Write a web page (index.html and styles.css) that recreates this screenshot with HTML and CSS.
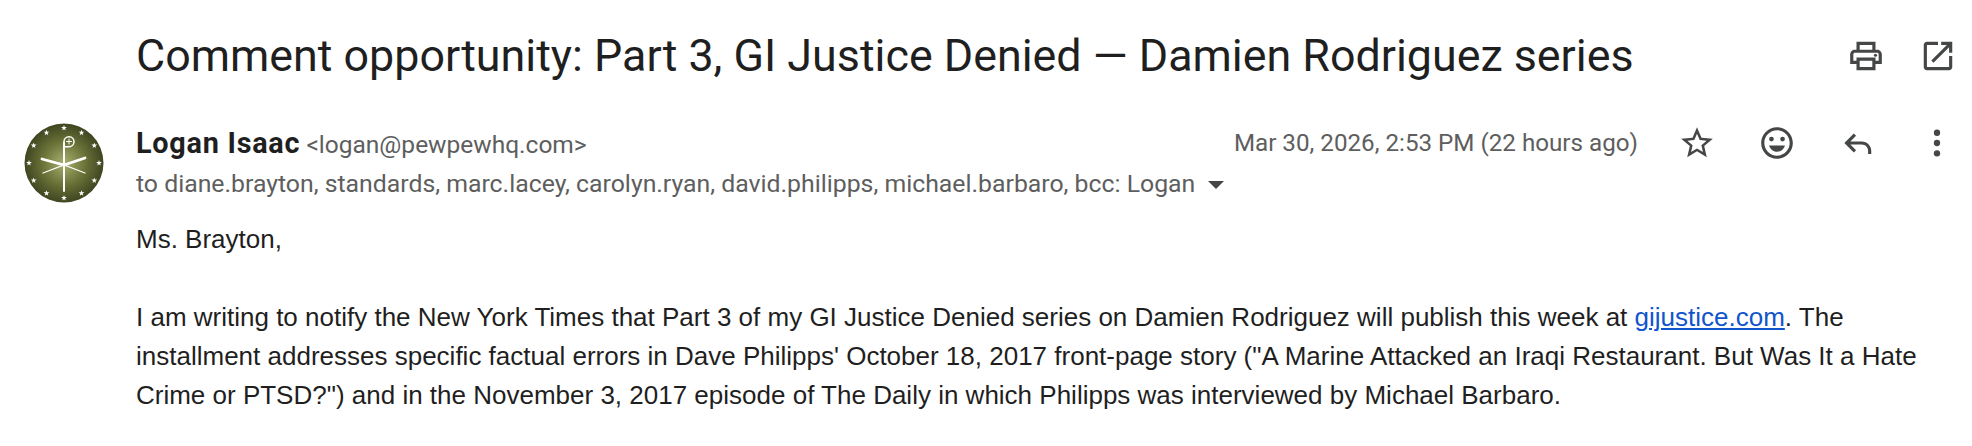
FILE: index.html
```html
<!DOCTYPE html>
<html lang="en">
<head>
<meta charset="utf-8">
<title>Comment opportunity</title>
<link rel="stylesheet" href="styles.css">
</head>
<body>
<main class="mail">
  <header class="subject-row">
    <h1 class="subject">Comment opportunity: Part 3, GI Justice Denied — Damien Rodriguez series</h1>
    <div class="subject-icons">
      <svg class="icon" viewBox="0 0 24 24"><path d="M19 8h-1V3H6v5H5c-1.66 0-3 1.34-3 3v6h4v4h12v-4h4v-6c0-1.66-1.34-3-3-3zM8 5h8v3H8V5zm8 14H8v-4h8v4zm2-4v-2H6v2H4v-4c0-.55.45-1 1-1h14c.55 0 1 .45 1 1v4h-2z"/><circle cx="18" cy="11.500" r="1"/></svg>
      <svg class="icon" viewBox="0 0 24 24"><path d="M19 19H5V5h7V3H5c-1.100 0-2 .9-2 2v14c0 1.100.9 2 2 2h14c1.100 0 2-.9 2-2v-7h-2v7zM14 3v2h3.590l-9.830 9.830 1.410 1.410L19 6.410V10h2V3h-7z"/></svg>
    </div>
  </header>
  <section class="message">
    <svg class="avatar" viewBox="0 0 80 80">
      <defs>
        <radialGradient id="olive"><stop offset="0" stop-color="#a8b070"/><stop offset="0.55" stop-color="#6a7238"/><stop offset="1" stop-color="#3f4520"/></radialGradient>
        <path id="st" d="M0-3L.7-1 2.900-1 1.100.4 1.800 2.500 0 1.200-1.800 2.500-1.100.4-2.900-1-.7-1z" fill="#fff"/>
      </defs>
      <circle cx="40" cy="40" r="39.500" fill="url(#olive)"/>
      <use href="#st" x="40" y="5"/><use href="#st" x="57.500" y="9.700"/><use href="#st" x="70.300" y="22.500"/><use href="#st" x="75" y="40"/><use href="#st" x="70.300" y="57.500"/><use href="#st" x="57.500" y="70.300"/><use href="#st" x="40" y="75"/><use href="#st" x="22.500" y="70.300"/><use href="#st" x="9.700" y="57.500"/><use href="#st" x="5" y="40"/><use href="#st" x="9.700" y="22.500"/><use href="#st" x="22.500" y="9.700"/>
      <g fill="none" stroke="#fff" stroke-linecap="round">
        <path d="M40 68V20" stroke-width="2"/>
        <path d="M40 27V18.500a5 5 0 1 1 5 5.200h-4" stroke-width="1.500"/>
        <path d="M45 16v5M42.500 18.500h5" stroke-width="1"/>
        <path d="M18 36L40 42L61 35" stroke-width="2.800"/>
        <path d="M19 50L40 42L61 50" stroke-width="1.300"/>
      </g>
    </svg>
    <div class="message-main">
      <div class="meta">
        <div class="from-block">
          <div class="from"><strong class="name">Logan Isaac</strong> <span class="addr">&lt;logan@pewpewhq.com&gt;</span></div>
          <div class="to">to diane.brayton, standards, marc.lacey, carolyn.ryan, david.philipps, michael.barbaro, bcc: Logan<span class="caret"></span></div>
        </div>
        <div class="actions">
          <span class="date">Mar 30, 2026, 2:53 PM (22 hours ago)</span>
          <svg class="icon" viewBox="0 0 24 24"><path d="M22 9.240l-7.190-.62L12 2 9.190 8.630 2 9.240l5.460 4.730L5.820 21 12 17.270 18.180 21l-1.630-7.030L22 9.240zM12 15.400l-3.760 2.270 1-4.280-3.320-2.880 4.380-.38L12 6.100l1.710 4.040 4.380.38-3.320 2.880 1 4.280L12 15.400z"/></svg>
          <svg class="icon" viewBox="0 0 24 24"><path d="M12 2C6.480 2 2 6.480 2 12s4.480 10 10 10 10-4.480 10-10S17.520 2 12 2zm0 18c-4.410 0-8-3.590-8-8s3.590-8 8-8 8 3.590 8 8-3.590 8-8 8z"/><circle cx="8.500" cy="9.500" r="1.500"/><circle cx="15.500" cy="9.500" r="1.500"/><path d="M7 13.500h10c-.6 2.300-2.600 4-5 4s-4.400-1.700-5-4z"/></svg>
          <svg class="icon" viewBox="0 0 24 24"><path d="M21 17v2h-2v-2c0-2.210-1.790-4-4-4H7.830l3.590 3.590L10 18l-6-6 6-6 1.410 1.410L7.830 11H15c3.310 0 6 2.690 6 6z"/></svg>
          <svg class="icon" viewBox="0 0 24 24"><circle cx="12" cy="5.500" r="2"/><circle cx="12" cy="12" r="2"/><circle cx="12" cy="18.500" r="2"/></svg>
        </div>
      </div>
      <div class="body">
        <p>Ms. Brayton,</p>
        <p>I am writing to notify the New York Times that Part 3 of my GI Justice Denied series on Damien Rodriguez will publish this week at <a href="#">gijustice.com</a>. The <span>installment addresses specific factual errors in Dave Philipps' October 18, 2017 front-page story ("A Marine Attacked an Iraqi Restaurant. But Was It a Hate Crime or PTSD?") and in the November 3, 2017 episode of The Daily in which Philipps was interviewed by Michael Barbaro.</span></p>
      </div>
    </div>
  </section>
</main>
</body>
</html>
```
FILE: styles.css
```css
html, body {
  margin: 0;
  padding: 0;
  background: #fff;
}
body {
  width: 1972px;
  height: 446px;
  overflow: hidden;
  font-family: Roboto, "Liberation Sans", sans-serif;
  color: #1f1f1f;
}
.mail {
  padding-top: 28px;
}
.subject-row {
  display: flex;
  align-items: center;
  justify-content: space-between;
  height: 56px;
  padding: 0 15px 0 136px;
}
.subject {
  margin: 0;
  font-size: 44.800px;
  font-weight: 400;
  line-height: 56px;
  white-space: nowrap;
}
.subject-icons {
  display: flex;
  gap: 34px;
}
.icon {
  width: 38px;
  height: 38px;
  fill: #444746;
  flex: none;
}
.message {
  display: flex;
  margin-top: 39px;
  padding-left: 24px;
}
.avatar {
  width: 80px;
  height: 80px;
  flex: none;
  margin: 0 32px 0 0;
}
.message-main {
  flex: 1;
  min-width: 0;
}
.meta {
  display: flex;
  justify-content: space-between;
  padding-right: 16px;
}
.from-block {
  white-space: nowrap;
}
.from {
  height: 40px;
  line-height: 40px;
  font-size: 24.500px;
}
.name {
  font-weight: 700;
  font-size: 28.800px;
  letter-spacing: 0.750px;
}
.addr {
  color: #5e5e5e;
}
.to {
  height: 40px;
  line-height: 42px;
  font-size: 24.800px;
  color: #5e5e5e;
}
.caret {
  display: inline-block;
  width: 0;
  height: 0;
  margin-left: 13px;
  vertical-align: middle;
  border-left: 8px solid transparent;
  border-right: 8px solid transparent;
  border-top: 8px solid #444746;
}
.actions {
  display: flex;
  align-items: center;
  align-self: flex-start;
  height: 40px;
  gap: 42px;
}
.date {
  font-size: 24.200px;
  color: #5e5e5e;
  white-space: nowrap;
  margin-right: -2px;
}
.body {
  font-family: "Liberation Sans", Arial, sans-serif;
  font-size: 26px;
  line-height: 39px;
  color: #1f1f1f;
  padding-right: 40px;
  margin-top: 17px;
}
.body p {
  margin: 0 0 39px;
}
.body a {
  color: #1155cc;
}
```
